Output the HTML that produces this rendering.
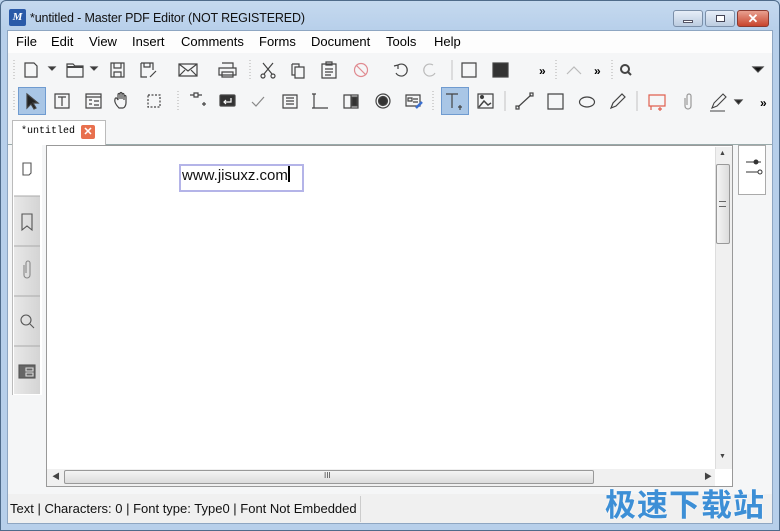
<!DOCTYPE html>
<html><head><meta charset="utf-8"><style>
*{margin:0;padding:0;box-sizing:border-box}
body{width:780px;height:531px;overflow:hidden;background:#bcd3ec;font-family:"Liberation Sans","Noto Sans CJK SC",sans-serif;font-size:13px;color:#000;position:relative}
.a{position:absolute}
#frame{left:0;top:0;width:780px;height:531px;background:linear-gradient(#c5d9ef,#b7cfea 30px,#b7cfea);border:1px solid #4f6b8a;border-radius:6px 6px 0 0}
#client{left:7px;top:30px;width:766px;height:494px;background:#f5f6f7;border:1px solid #8ea6c2}
svg{position:absolute}
</style></head><body>
<div class="a" id="frame"></div>
<div class="a" style="left:9px;top:9px;width:17px;height:17px;background:#2a5aa8;border-radius:2px;color:#fff;font:italic bold 11px 'Liberation Serif',serif;text-align:center;line-height:17px">M</div>
<div class="a" style="left:30px;top:11px;font-size:12.5px;letter-spacing:-0.15px;color:#111">*untitled - Master PDF Editor (NOT REGISTERED)</div>
<div class="a" style="left:673px;top:10px;width:30px;height:17px;border:1px solid #7b8fa8;border-radius:3px;background:linear-gradient(#e6eef8,#bccce0)"><div class="a" style="left:9px;top:9px;width:10px;height:3px;background:#fff;border:1px solid #556"></div></div>
<div class="a" style="left:705px;top:10px;width:30px;height:17px;border:1px solid #7b8fa8;border-radius:3px;background:linear-gradient(#e6eef8,#bccce0)"><div class="a" style="left:10px;top:4px;width:9px;height:7px;border:1px solid #445;background:#fff"></div></div>
<div class="a" style="left:737px;top:10px;width:32px;height:17px;border:1px solid #8a3a30;border-radius:3px;background:linear-gradient(#e8a090,#c8442c);color:#fff;font-weight:bold;text-align:center;line-height:15px;font-size:13px">✕</div>
<div class="a" id="client"></div>
<div class="a" style="left:8px;top:31px;width:764px;height:22px;background:#fdfdfd"></div>
<div class="a" style="left:16px;top:34px">File</div>
<div class="a" style="left:51px;top:34px">Edit</div>
<div class="a" style="left:89px;top:34px">View</div>
<div class="a" style="left:132px;top:34px">Insert</div>
<div class="a" style="left:181px;top:34px">Comments</div>
<div class="a" style="left:259px;top:34px">Forms</div>
<div class="a" style="left:311px;top:34px">Document</div>
<div class="a" style="left:386px;top:34px">Tools</div>
<div class="a" style="left:434px;top:34px">Help</div>
<svg style="left:0;top:55px" width="780" height="30" fill="none" stroke="#444" stroke-width="1.2">
<line x1="14" y1="5" x2="14" y2="25" stroke="#bbb" stroke-dasharray="1 2"/>
<path d="M25 8h9l3 3v11H25z"/><path d="M49 12l3 3 3-3z" fill="#333"/>
<path d="M67 9h6l2 2h8v11H67z"/><path d="M67 12h16" stroke-width="2"/><path d="M91 12l3 3 3-3z" fill="#333"/>
<path d="M111 8h13v14h-13z"/><path d="M114 8v5h7V8M114 22v-5h7v5"/>
<path d="M141 8h12v7M141 8v14h6"/><path d="M144 8v4h6V8"/><path d="M150 22l6-6"/>
<path d="M179 9h18v12h-18z M179 9l9 7 9-7 M179 21l6-6 M197 21l-6-6"/>
<path d="M219 13h17v7h-17z M222 8h11v5 M222 17h11v5h-11z"/>
<line x1="250" y1="5" x2="250" y2="25" stroke="#bbb" stroke-dasharray="1 2"/>
<path d="M263 8l9 11 M273 8l-9 11"/><circle cx="263" cy="21" r="2"/><circle cx="273" cy="21" r="2"/>
<path d="M292 9h7v3 M292 9v11h3 M295 12h9v11h-9z"/>
<path d="M322 9h14v14h-14z M326 7h6v3h-6z M325 14h8 M325 17h8 M325 20h6"/>
<circle cx="361" cy="15" r="6.5" stroke="#e08a90"/><path d="M356 10l10 10" stroke="#e08a90"/>
<path d="M398 10a6 6 0 1 1 -2 8 M394 11l4-1 0 4"/>
<path d="M433 10a6 6 0 1 0 2 8" stroke="#bbb"/>
<line x1="452" y1="5" x2="452" y2="25" stroke="#ccc"/>
<path d="M462 8h14v14h-14z"/><path d="M464 22h12V10" stroke-width="1"/>
<rect x="493" y="8" width="15" height="14" fill="#333"/>
<text x="539" y="20" font-size="12" fill="#000" stroke="none" font-weight="bold">»</text>
<line x1="556" y1="5" x2="556" y2="25" stroke="#bbb" stroke-dasharray="1 2"/>
<path d="M567 19l7-7 7 7" stroke="#bbb"/>
<text x="594" y="20" font-size="12" fill="#000" stroke="none" font-weight="bold">»</text>
<line x1="612" y1="5" x2="612" y2="25" stroke="#bbb" stroke-dasharray="1 2"/>
<circle cx="625" cy="14" r="4" stroke-width="2"/><path d="M628 17l3 3" stroke-width="2"/>
<path d="M753 12h10l-5 5z" fill="#111"/>
</svg>
<div class="a" style="left:18px;top:87px;width:28px;height:28px;background:#a9c6e6;border:1px solid #6f9bd0"></div>
<div class="a" style="left:441px;top:87px;width:28px;height:28px;background:#a9c6e6;border:1px solid #6f9bd0"></div>
<svg style="left:0;top:86px" width="780" height="30" fill="none" stroke="#444" stroke-width="1.2">
<line x1="14" y1="5" x2="14" y2="25" stroke="#bbb" stroke-dasharray="1 2"/>
<path d="M27 8v14l4-4 3 5 2-1-3-5h5z" fill="#222"/>
<path d="M55 8h14v14H55z M58 11h8 M62 11v9"/>
<path d="M86 8h15v14H86z M86 11h15 M89 14h3 M89 18h3 M94 15h5 M94 19h5"/>
<path d="M119 22c-3-3-5-6-4-9s3 1 3 1v-5c0-2 2-2 2 0v4-5c0-2 2-2 2 0v5-4c0-2 2-2 2 0v5-3c0-2 2-2 2 0v6c0 3-2 5-3 5z"/>
<path d="M148 9h12v12h-12z" stroke-dasharray="2 1.5"/>
<line x1="178" y1="5" x2="178" y2="25" stroke="#bbb" stroke-dasharray="1 2"/>
<path d="M190 9h4 M198 9h4 M194 7h4v4h-4z M202 18h4 M204 16v4"/>
<rect x="220" y="9" width="15" height="11" rx="1" fill="#333"/><path d="M231 12v4h-6 M226 14l-2 2 2 2" stroke="#fff"/>
<path d="M252 16l4 4 8-9" stroke="#888"/>
<path d="M283 9h14v13h-14z M286 12h8 M286 15h8 M286 18h8"/>
<path d="M314 8v14 M312 8h4 M312 22h4 M316 22h12"/>
<path d="M344 9h14v13h-14z M351 9v13"/><rect x="352" y="11" width="5" height="9" fill="#333"/>
<circle cx="383" cy="15" r="7"/><circle cx="383" cy="15" r="4.5" fill="#333"/>
<path d="M406 9h14v11h-14z M408 12h4v3h-4z M413 13h5 M413 16h5"/><path d="M416 22l6-6" stroke="#3a6fd0" stroke-width="2.5"/>
<line x1="433" y1="5" x2="433" y2="25" stroke="#bbb" stroke-dasharray="1 2"/>
<path d="M446 8h12 M452 8v14 M460 19v5 M458 21h4"/>
<path d="M478 8h15v14h-15z"/><path d="M479 21l5-6 4 4 3-2" stroke-width="1.5"/><circle cx="482" cy="11" r="1.5" fill="#333"/>
<line x1="505" y1="5" x2="505" y2="25" stroke="#ccc"/>
<path d="M518 21l13-12"/><rect x="516" y="20" width="3" height="3"/><rect x="530" y="7" width="3" height="3"/>
<path d="M548 8h15v15h-15z"/>
<ellipse cx="587" cy="16" rx="7.5" ry="5"/>
<path d="M611 22l2-5 9-9 3 3-9 9z"/>
<line x1="637" y1="5" x2="637" y2="25" stroke="#ccc"/>
<path d="M649 9h16v11h-16z M651 20v4" stroke="#e06050"/><path d="M660 21v4 M658 23h4" stroke="#e06050"/>
<path d="M685 12v8a3 3 0 0 0 6 0v-10a2 2 0 0 0-4 0v9" stroke="#999"/>
<path d="M712 22l2-5 9-9 3 3-9 9z M710 25h15" stroke-width="1.1"/><path d="M735 14h7l-3.5 4z" fill="#222"/>
<text x="760" y="21" font-size="12" fill="#000" stroke="none" font-weight="bold">»</text>
</svg>
<div class="a" style="left:8px;top:144px;width:764px;height:1px;background:#9aa"></div>
<div class="a" style="left:12px;top:120px;width:94px;height:25px;background:#fff;border:1px solid #bbb;border-bottom:none"></div>
<div class="a" style="left:21px;top:126px;font:10px 'Liberation Mono',monospace">*untitled</div>
<div class="a" style="left:81px;top:125px;width:14px;height:14px;background:#e8704e;border-radius:2px;color:#fff;font-size:11px;text-align:center;line-height:14px;font-weight:bold">✕</div>
<div class="a" style="left:12px;top:145px;width:30px;height:250px;background:#fff;border-left:1px solid #bbb"></div>
<div class="a" style="left:14px;top:196px;width:26px;height:198px;background:linear-gradient(90deg,#e8e8e8,#d4d4d4)"></div>
<svg style="left:12px;top:145px" width="30" height="250" fill="none" stroke="#555" stroke-width="1.1">
<path d="M11 18h8v10l-2 2h-6z"/>
<path d="M2 51h26 M2 101h26 M2 151h26 M2 201h26" stroke="#aaa"/>
<path d="M10 69h10v16l-5-4-5 4z"/>
<path d="M12 120v10a3 3 0 0 0 6 0v-12a2 2 0 0 0-4 0v10" stroke="#888"/>
<circle cx="14" cy="175" r="5"/><path d="M18 179l4 4"/>
<rect x="7" y="220" width="16" height="13" fill="#666" stroke="#555"/><path d="M14 223h7v3h-7z M14 228h7v3h-7z" stroke="#ddd"/>
</svg>
<div class="a" style="left:46px;top:145px;width:687px;height:342px;background:#fff;border:1px solid #999"></div>
<div class="a" style="left:179px;top:164px;width:125px;height:28px;border:2px solid #b4b4e8"></div>
<div class="a" style="left:182px;top:166px;font-size:15px;color:#111">www.jisuxz.com<span style="display:inline-block;width:2px;height:16px;background:#000;vertical-align:-2px"></span></div>
<div class="a" style="left:715px;top:147px;width:17px;height:322px;background:#f0f0f0;border-left:1px solid #ddd"></div>
<div class="a" style="left:719px;top:150px;font-size:7px;color:#444">▲</div>
<div class="a" style="left:716px;top:164px;width:14px;height:80px;border:1px solid #999;border-radius:2px;background:linear-gradient(90deg,#f4f4f4,#dcdcdc)"></div>
<div class="a" style="left:719px;top:201px;width:7px;height:6px;border-top:1px solid #666;border-bottom:1px solid #666"></div>
<div class="a" style="left:719px;top:453px;font-size:7px;color:#444">▼</div>
<div class="a" style="left:47px;top:469px;width:668px;height:17px;background:#f0f0f0"></div>
<div class="a" style="left:52px;top:471px;font-size:8px;color:#444">◀</div>
<div class="a" style="left:64px;top:470px;width:530px;height:14px;border:1px solid #999;border-radius:2px;background:linear-gradient(#f4f4f4,#dcdcdc)"></div>
<div class="a" style="left:324px;top:471px;font-size:8px;color:#444">III</div>
<div class="a" style="left:704px;top:471px;font-size:8px;color:#444">▶</div>
<div class="a" style="left:738px;top:145px;width:28px;height:50px;background:#fff;border:1px solid #aaa"></div>
<svg style="left:738px;top:145px" width="30" height="50" stroke="#333" fill="none">
<path d="M8 17h15"/><circle cx="18" cy="17" r="2" fill="#333"/><path d="M8 27h12"/><circle cx="22" cy="27" r="2" fill="#fff"/>
</svg>
<div class="a" style="left:8px;top:494px;width:764px;height:29px;background:#f0f0f0"></div>
<div class="a" style="left:10px;top:501px;font-size:13px;color:#111">Text | Characters: 0 | Font type: Type0 | Font Not Embedded</div>
<div class="a" style="left:360px;top:496px;width:1px;height:26px;background:#ccc"></div>
<div class="a" style="left:605px;top:480px;font:bold 31px 'Noto Sans CJK SC',sans-serif;color:#3d8fd6;letter-spacing:1px;text-shadow:0 0 2px #fff">极速下载站</div>
</body></html>
